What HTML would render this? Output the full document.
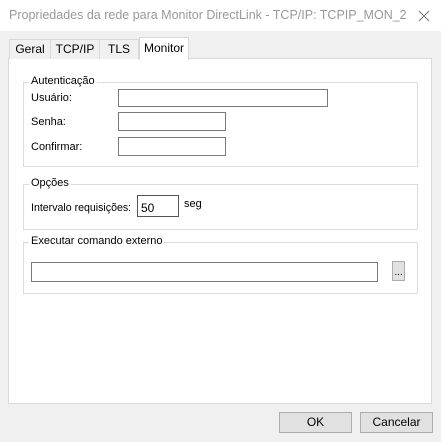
<!DOCTYPE html>
<html><head><style>
*{box-sizing:border-box;margin:0;padding:0}
body{width:441px;height:442px;background:#f0f0f0;font-family:"Liberation Sans",sans-serif;font-size:11px;color:#000;position:relative;overflow:hidden}
.a{position:absolute}
.title{left:0;top:0;width:441px;height:31px;background:#fff}
.tt{left:9px;top:8px;font-size:12.5px;color:#999}
.panel{left:8px;top:58px;width:424px;height:346px;background:#fff;border:1px solid #d9d9d9}
.tab{top:39px;height:20px;border:1px solid #d9d9d9;border-bottom:none;background:#f0f0f0;text-align:center;line-height:18px;font-size:12px}
.grp{border:1px solid #dcdcdc}
.lg{background:#fff;padding:0 2px;font-size:11px}
.in{background:#fff;border:1px solid #7a7a7a}
.btn{background:#e1e1e1;border:1px solid #adadad;text-align:center;font-size:12px;line-height:18px}
</style></head><body>
<div class="a title"></div>
<div class="a tt">Propriedades da rede para Monitor DirectLink - TCP/IP: TCPIP_MON_2</div>
<svg class="a" style="left:418px;top:10px" width="12" height="12"><path d="M1 1L11 11M11 1L1 11" stroke="#777" stroke-width="1"/></svg>
<div class="a panel"></div>
<div class="a tab" style="left:9px;width:42px">Geral</div>
<div class="a tab" style="left:50px;width:50px">TCP/IP</div>
<div class="a tab" style="left:99px;width:40px">TLS</div>
<div class="a tab" style="left:139px;width:50px;top:37px;height:23px;background:#fff;line-height:20px">Monitor</div>

<div class="a grp" style="left:23px;top:82px;width:395px;height:85px"></div>
<div class="a lg" style="left:29px;top:75px">Autenticação</div>
<div class="a" style="left:31px;top:92px">Usuário:</div>
<div class="a in" style="left:118px;top:89px;width:210px;height:18px"></div>
<div class="a" style="left:31px;top:116px">Senha:</div>
<div class="a in" style="left:118px;top:112px;width:108px;height:19px"></div>
<div class="a" style="left:31px;top:141px">Confirmar:</div>
<div class="a in" style="left:118px;top:137px;width:108px;height:19px"></div>

<div class="a grp" style="left:23px;top:184px;width:395px;height:46px"></div>
<div class="a lg" style="left:29px;top:177px">Opções</div>
<div class="a" style="left:31px;top:202px;font-size:10.6px">Intervalo requisições:</div>
<div class="a in" style="left:137px;top:195px;width:42px;height:22px;border-color:#555;padding:5px 0 0 3px;font-size:12px">50</div>
<div class="a" style="left:184px;top:198px">seg</div>

<div class="a grp" style="left:23px;top:242px;width:395px;height:52px"></div>
<div class="a lg" style="left:29px;top:235px">Executar comando externo</div>
<div class="a in" style="left:31px;top:262px;width:347px;height:20px"></div>
<div class="a btn" style="left:392px;top:261px;width:13px;height:20px;font-size:10px;line-height:22px">...</div>

<div class="a btn" style="left:279px;top:412px;width:73px;height:21px">OK</div>
<div class="a btn" style="left:360px;top:412px;width:73px;height:21px">Cancelar</div>
</body></html>
